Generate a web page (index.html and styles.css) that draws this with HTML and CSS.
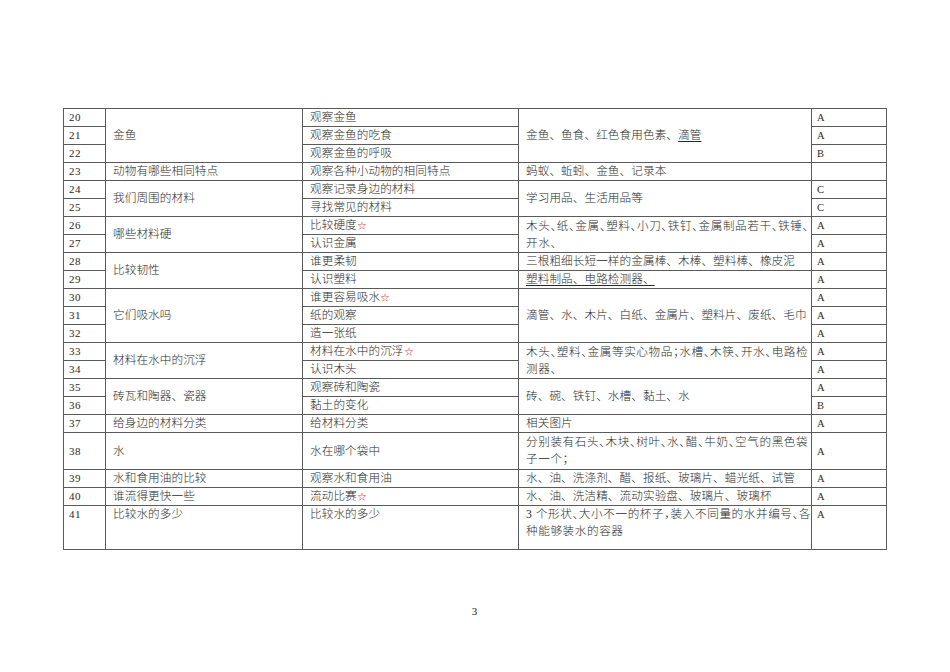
FILE: index.html
```html
<!DOCTYPE html>
<html lang="zh">
<head>
<meta charset="utf-8">
<title>教学计划</title>
<link rel="stylesheet" href="styles.css">
</head>
<body>
<div class="page">
<table class="plan">
<colgroup>
<col class="c-no"><col class="c-unit"><col class="c-lesson"><col class="c-mat"><col class="c-lvl">
</colgroup>
<tbody>
<tr><td class="no">20</td><td class="unit" rowspan="3">金鱼</td><td>观察金鱼</td><td rowspan="3">金鱼、鱼食、红色食用色素、<u>滴管</u></td><td class="lvl">A</td></tr>
<tr><td class="no">21</td><td>观察金鱼的吃食</td><td class="lvl">A</td></tr>
<tr><td class="no">22</td><td>观察金鱼的呼吸</td><td class="lvl">B</td></tr>
<tr><td class="no">23</td><td class="unit">动物有哪些相同特点</td><td>观察各种小动物的相同特点</td><td>蚂蚁、蚯蚓、金鱼、记录本</td><td class="lvl"></td></tr>
<tr><td class="no">24</td><td class="unit" rowspan="2">我们周围的材料</td><td>观察记录身边的材料</td><td rowspan="2">学习用品、生活用品等</td><td class="lvl">C</td></tr>
<tr><td class="no">25</td><td>寻找常见的材料</td><td class="lvl">C</td></tr>
<tr><td class="no">26</td><td class="unit" rowspan="2">哪些材料硬</td><td>比较硬度<span class="star">☆</span></td><td rowspan="2" class="tight">木头、纸、金属、塑料、小刀、铁钉、金属制品若干、铁锤、<br>开水、</td><td class="lvl">A</td></tr>
<tr><td class="no">27</td><td>认识金属</td><td class="lvl">A</td></tr>
<tr><td class="no">28</td><td class="unit" rowspan="2">比较韧性</td><td>谁更柔韧</td><td>三根粗细长短一样的金属棒、木棒、塑料棒、橡皮泥</td><td class="lvl">A</td></tr>
<tr><td class="no">29</td><td>认识塑料</td><td><u>塑料制品、电路检测器、</u></td><td class="lvl">A</td></tr>
<tr><td class="no">30</td><td class="unit" rowspan="3">它们吸水吗</td><td>谁更容易吸水<span class="star">☆</span></td><td rowspan="3">滴管、水、木片、白纸、金属片、塑料片、废纸、毛巾</td><td class="lvl">A</td></tr>
<tr><td class="no">31</td><td>纸的观察</td><td class="lvl">A</td></tr>
<tr><td class="no">32</td><td>造一张纸</td><td class="lvl">A</td></tr>
<tr><td class="no">33</td><td class="unit" rowspan="2">材料在水中的沉浮</td><td>材料在水中的沉浮<span class="star">☆</span></td><td rowspan="2" class="tight">木头、塑料、金属等实心物品；水槽、木筷、开水、电路检<br>测器、</td><td class="lvl">A</td></tr>
<tr><td class="no">34</td><td>认识木头</td><td class="lvl">A</td></tr>
<tr><td class="no">35</td><td class="unit" rowspan="2">砖瓦和陶器、瓷器</td><td>观察砖和陶瓷</td><td rowspan="2">砖、碗、铁钉、水槽、黏土、水</td><td class="lvl">A</td></tr>
<tr><td class="no">36</td><td>黏土的变化</td><td class="lvl">B</td></tr>
<tr><td class="no">37</td><td class="unit">给身边的材料分类</td><td>给材料分类</td><td>相关图片</td><td class="lvl">A</td></tr>
<tr class="r38"><td class="no">38</td><td class="unit">水</td><td>水在哪个袋中</td><td class="tight">分别装有石头、木块、树叶、水、醋、牛奶、空气的黑色袋<br>子一个；</td><td class="lvl">A</td></tr>
<tr><td class="no">39</td><td class="unit">水和食用油的比较</td><td>观察水和食用油</td><td>水、油、洗涤剂、醋、报纸、玻璃片、蜡光纸、试管</td><td class="lvl">A</td></tr>
<tr><td class="no">40</td><td class="unit">谁流得更快一些</td><td>流动比赛<span class="star">☆</span></td><td>水、油、洗洁精、流动实验盘、玻璃片、玻璃杯</td><td class="lvl">A</td></tr>
<tr class="r41"><td class="no">41</td><td class="unit">比较水的多少</td><td>比较水的多少</td><td class="tight">3 个形状、大小不一的杯子，装入不同量的水并编号、各<br>种能够装水的容器</td><td class="lvl">A</td></tr>
</tbody>
</table>
<div class="pageno">3</div>
</div>
</body>
</html>
```

FILE: styles.css
```css
html, body {
  margin: 0;
  padding: 0;
  background: #ffffff;
}

.page {
  width: 950px;
  height: 672px;
  padding: 108px 0 0 63px;
  box-sizing: border-box;
  font-family: "Liberation Serif", "Noto Sans CJK SC", serif;
  color: #2a2a2a;
}

.plan {
  border-collapse: collapse;
  table-layout: fixed;
  width: 823px;
  font-size: 11.6px;
  font-weight: 300;
}

.c-no { width: 42px; }
.c-unit { width: 197px; }
.c-lesson { width: 216px; }
.c-mat { width: 293px; }
.c-lvl { width: 75px; }

.plan td {
  border: 1px solid #5a5a5a;
  height: 17px;
  padding: 0 2px 0 7px;
  line-height: 17px;
  vertical-align: middle;
  white-space: nowrap;
  overflow: hidden;
  letter-spacing: 0.1px;
}

.plan td.no {
  padding-left: 5px;
  font-size: 11px;
  letter-spacing: 0.4px;
}

.plan td.lvl {
  padding-left: 5px;
  font-size: 10.5px;
}

.plan .r38 td { height: 36px; }
.plan .r41 td { height: 43px; vertical-align: top; }

.plan td.tight {
  font-feature-settings: "halt";
  letter-spacing: 0.6px;
}

.plan u {
  text-underline-offset: 2px;
}

.star {
  color: #e0403c;
  font-family: "DejaVu Sans", sans-serif;
  font-size: 10px;
}

.pageno {
  width: 823px;
  margin-top: 55px;
  text-align: center;
  font-size: 11px;
  color: #222;
}
```
